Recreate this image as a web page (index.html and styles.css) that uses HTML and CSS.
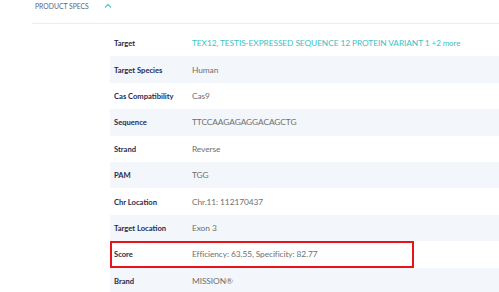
FILE: index.html
```html
<!DOCTYPE html>
<html lang="en">
<head>
    <meta charset="UTF-8">
    <title>Product Specs</title>
    <link rel="stylesheet" href="styles.css">
</head>
<body>
    <div class="section">
        <div class="section-head">
            <span class="section-title">PRODUCT SPECS</span>
            <svg class="chevron" width="8" height="5" viewBox="0 0 8 5">
                <path d="M1 4.5 L4 1.5 L7 4.5" fill="none" stroke="#5bc8cf" stroke-width="1.3"/>
            </svg>
        </div>

        <div class="specs">
            <div class="row"><div class="label">Target</div><div class="value link">TEX12, TESTIS-EXPRESSED SEQUENCE 12 PROTEIN VARIANT 1 <span class="more">+2 more</span></div></div>
            <div class="row"><div class="label">Target Species</div><div class="value">Human</div></div>
            <div class="row"><div class="label">Cas Compatibility</div><div class="value">Cas9</div></div>
            <div class="row"><div class="label">Sequence</div><div class="value">TTCCAAGAGAGGACAGCTG</div></div>
            <div class="row"><div class="label">Strand</div><div class="value">Reverse</div></div>
            <div class="row"><div class="label">PAM</div><div class="value">TGG</div></div>
            <div class="row"><div class="label">Chr Location</div><div class="value">Chr.11: 112170437</div></div>
            <div class="row"><div class="label">Target Location</div><div class="value">Exon 3</div></div>
            <div class="row highlight"><div class="label">Score</div><div class="value">Efficiency: 63.55, Specificity: 82.77</div></div>
            <div class="row"><div class="label">Brand</div><div class="value">MISSION®</div></div>
        </div>
    </div>
</body>
</html>
```

FILE: styles.css
```css
body {
    margin: 0;
    font-family: Lato, 'Liberation Sans', sans-serif;
    background-color: #ffffff;
    color: #707070;
    overflow: hidden;
}

.section-head {
    display: flex;
    align-items: center;
    height: 11px;
    margin-left: 32px;
    padding-left: 3px;
    padding-bottom: 12px;
    border-bottom: 1.5px solid #ececee;
}

.section-title {
    font-size: 6.8px;
    color: #5d6479;
}

.chevron {
    margin-left: 15px;
    margin-top: -1px;
}

.specs {
    margin-left: 110px;
    margin-top: 6px;
}

.row {
    position: relative;
    display: flex;
    align-items: center;
    height: 26.4px;
}

.row:nth-child(even) {
    background: #f3f6fa;
}

.label {
    width: 78px;
    padding-left: 4px;
    font-weight: 700;
    font-size: 7.6px;
    color: #1f2b50;
}

.value {
    font-size: 8.4px;
    letter-spacing: -0.1px;
    white-space: nowrap;
}

.value.link {
    color: #40c2c5;
}

.value .more {
    font-size: 8px;
}

/* annotation box drawn over the score row */
.row.highlight::after {
    content: '';
    position: absolute;
    left: 0;
    top: 0;
    width: 304px;
    height: 100%;
    box-sizing: border-box;
    border: 2px solid #e8141a;
}
```
